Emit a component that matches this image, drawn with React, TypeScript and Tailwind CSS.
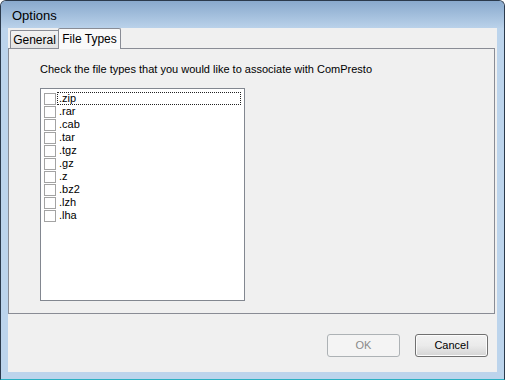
const fileTypes = [".zip", ".rar", ".cab", ".tar", ".tgz", ".gz", ".z", ".bz2", ".lzh", ".lha"];

function CheckRow({ label, focused }: { label: string; focused?: boolean }) {
  return (
    <div className="flex items-center h-[13px]">
      <span className="w-[12px] h-[12px] border border-[#a3a3a3] bg-white shrink-0" />
      <span
        className={
          "ml-[1px] pl-[2px] h-[13px] flex items-center leading-[13px] flex-1 " +
          (focused ? "outline outline-1 outline-dotted outline-[#222] -outline-offset-1" : "")
        }
      >
        {label}
      </span>
    </div>
  );
}

export default function App() {
  return (
    <div
      className="w-[505px] h-[380px] flex flex-col bg-[#bcd4ec] border border-[#2b3a4c] border-b-[#2ab0c2] rounded-t-[6px] overflow-hidden text-black"
      style={{ fontFamily: '"Liberation Sans", Arial, sans-serif' }}
    >
      {/* title bar */}
      <div className="h-[27px] shrink-0 bg-gradient-to-b from-[#89a9cd] to-[#bad2ea] flex items-center pl-[11px] pt-[3px]">
        <span className="text-[13px] text-black">Options</span>
      </div>

      {/* client area */}
      <div className="mx-[7px] mb-[7px] flex-1 bg-[#f0f0f0] flex flex-col text-[11px]">
        {/* tab strip */}
        <div className="h-[20px] flex items-end pl-[2px] relative z-10 text-[12px]">
          <div className="h-[18px] w-[48px] border border-[#898c95] border-b-0 border-r-0 bg-gradient-to-b from-[#f2f2f2] to-[#e3e3e3] flex items-center justify-center rounded-tl-[2px]">
            General
          </div>
          <div className="h-[21px] w-[63px] -mb-px border border-[#898c95] border-b-0 bg-[#f9f9f9] flex items-center justify-center rounded-t-[2px]">
            File Types
          </div>
        </div>

        {/* tab page */}
        <div className="h-[266px] mr-[2px] border border-[#898c95] bg-[#f0f0f0] flex flex-col pl-[31px] pt-[14px]">
          <div className="leading-[13px] h-[13px]">
            Check the file types that you would like to associate with ComPresto
          </div>
          <div className="mt-[12px] w-[205px] h-[213px] border border-[#828790] bg-white p-[3px]">
            {fileTypes.map((t, i) => (
              <CheckRow key={t} label={t} focused={i === 0} />
            ))}
          </div>
        </div>

        {/* buttons */}
        <div className="flex justify-end gap-[15px] mt-[20px] mr-[9px]">
          <button className="w-[73px] h-[23px] rounded-[3px] border border-[#adb2b5] bg-[#f4f4f4] text-[#8a8a8a] text-[11px]">
            OK
          </button>
          <button className="w-[73px] h-[23px] rounded-[3px] border border-[#707070] bg-gradient-to-b from-[#f2f2f2] via-[#ebebeb] to-[#d4d4d4] text-black text-[11px] shadow-[inset_0_0_0_1px_#fcfcfc]">
            Cancel
          </button>
        </div>
      </div>
    </div>
  );
}
